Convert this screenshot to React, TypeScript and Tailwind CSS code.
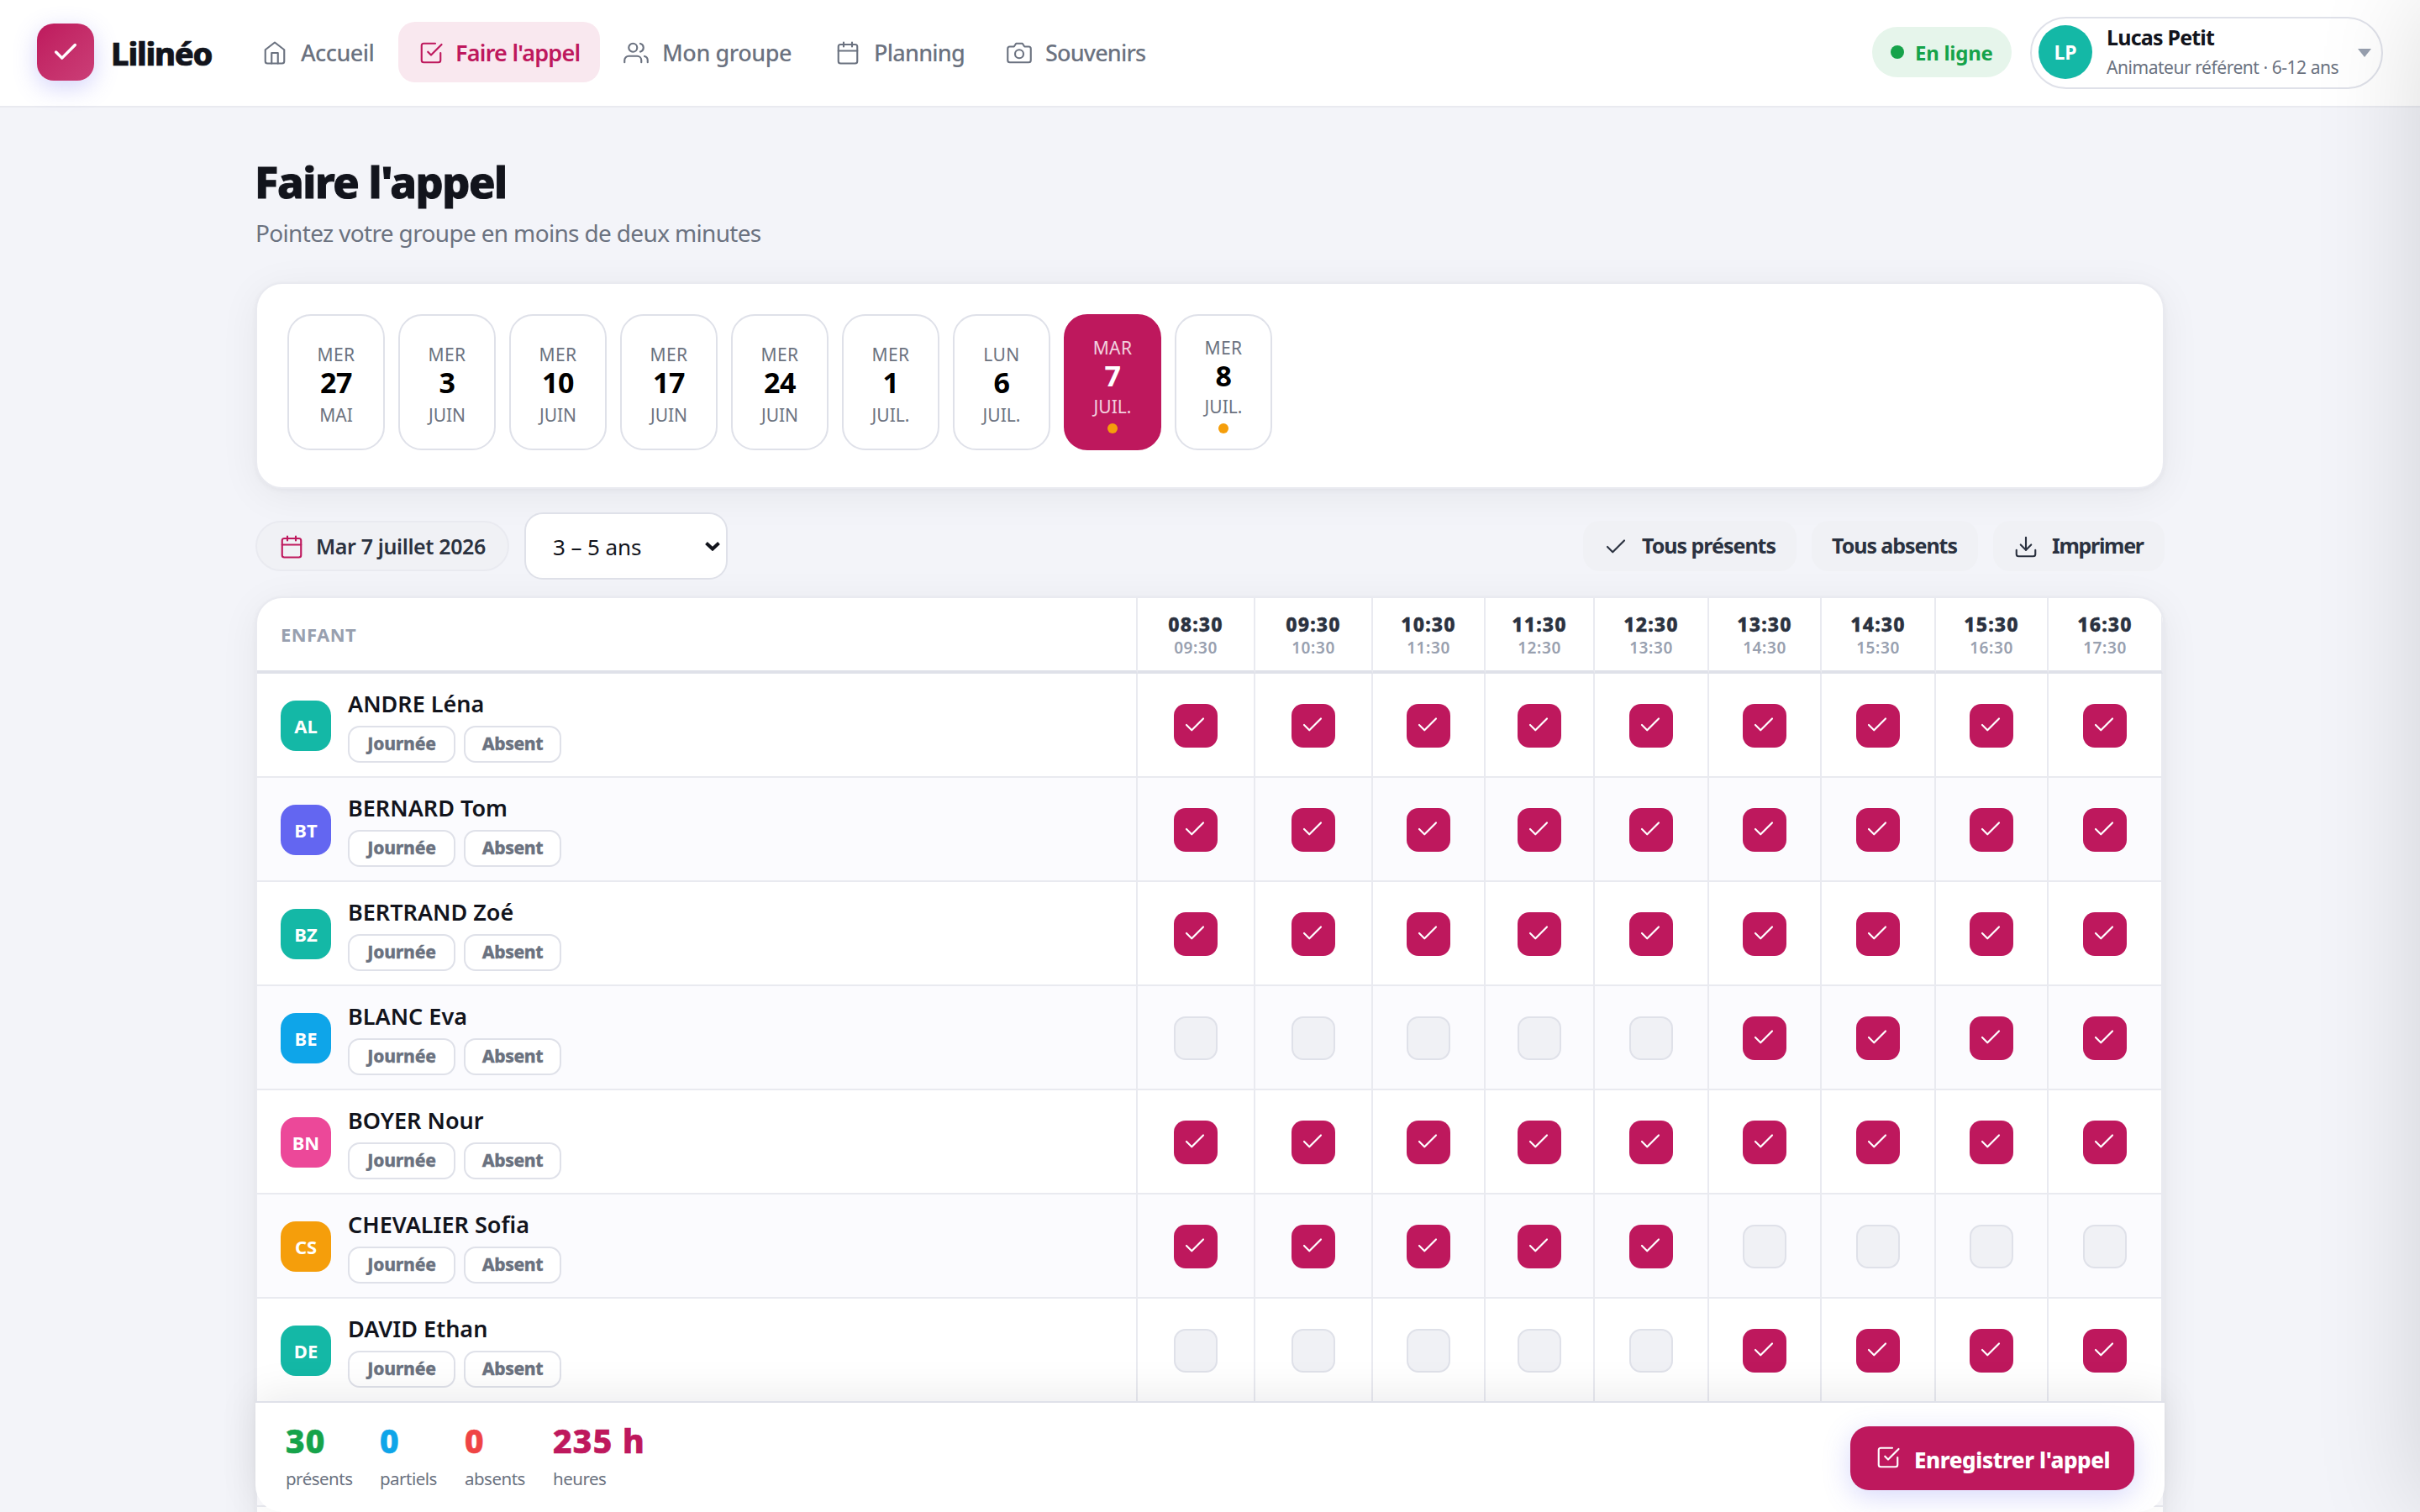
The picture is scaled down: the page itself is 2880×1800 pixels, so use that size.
import React from "react";

type IconName = "home" | "checkSquare" | "users" | "calendar" | "camera" | "check" | "download";

const shapes: Record<IconName, React.ReactNode> = {
  home: (
    <>
      <path d="M3 9l9-7 9 7v11a2 2 0 0 1-2 2H5a2 2 0 0 1-2-2z" />
      <polyline points="9 22 9 12 15 12 15 22" />
    </>
  ),
  checkSquare: (
    <>
      <polyline points="9 11 12 14 22 4" />
      <path d="M21 12v7a2 2 0 0 1-2 2H5a2 2 0 0 1-2-2V5a2 2 0 0 1 2-2h11" />
    </>
  ),
  users: (
    <>
      <path d="M17 21v-2a4 4 0 0 0-4-4H5a4 4 0 0 0-4 4v2" />
      <circle cx="9" cy="7" r="4" />
      <path d="M23 21v-2a4 4 0 0 0-3-3.87" />
      <path d="M16 3.13a4 4 0 0 1 0 7.75" />
    </>
  ),
  calendar: (
    <>
      <rect x="3" y="4" width="18" height="18" rx="2" />
      <path d="M16 2v4M8 2v4M3 10h18" />
    </>
  ),
  camera: (
    <>
      <path d="M23 19a2 2 0 0 1-2 2H3a2 2 0 0 1-2-2V8a2 2 0 0 1 2-2h4l2-3h6l2 3h4a2 2 0 0 1 2 2z" />
      <circle cx="12" cy="13" r="4" />
    </>
  ),
  check: <polyline points="20 6 9 17 4 12" />,
  download: (
    <>
      <path d="M21 15v4a2 2 0 0 1-2 2H5a2 2 0 0 1-2-2v-4" />
      <polyline points="7 10 12 15 17 10" />
      <path d="M12 15V3" />
    </>
  ),
};

function Icon({ name, className = "", stroke = 1.7 }: { name: IconName; className?: string; stroke?: number }) {
  return (
    <svg
      viewBox="0 0 24 24"
      fill="none"
      stroke="currentColor"
      strokeWidth={stroke}
      strokeLinecap="round"
      strokeLinejoin="round"
      className={`shrink-0 ${className || "size-[30px]"}`}
    >
      {shapes[name]}
    </svg>
  );
}

const nav: { label: string; icon: IconName; width: string; text: string; active?: boolean }[] = [
  { label: "Accueil", icon: "home", width: "w-[182px]", text: "tracking-[-0.57px]" },
  { label: "Faire l'appel", icon: "checkSquare", width: "w-[240px]", text: "tracking-[-0.76px]", active: true },
  { label: "Mon groupe", icon: "users", width: "w-[248px]", text: "tracking-[-0.45px]" },
  { label: "Planning", icon: "calendar", width: "w-[200px]", text: "tracking-[-0.75px]" },
  { label: "Souvenirs", icon: "camera", width: "w-[214px]", text: "tracking-[-0.83px]" },
];

const days: { dow: string; num: string; month: string; dot?: boolean; selected?: boolean }[] = [
  { dow: "MER", num: "27", month: "MAI" },
  { dow: "MER", num: "3", month: "JUIN" },
  { dow: "MER", num: "10", month: "JUIN" },
  { dow: "MER", num: "17", month: "JUIN" },
  { dow: "MER", num: "24", month: "JUIN" },
  { dow: "MER", num: "1", month: "JUIL." },
  { dow: "LUN", num: "6", month: "JUIL." },
  { dow: "MAR", num: "7", month: "JUIL.", dot: true, selected: true },
  { dow: "MER", num: "8", month: "JUIL.", dot: true },
];

const slots = [
  ["08:30", "09:30"],
  ["09:30", "10:30"],
  ["10:30", "11:30"],
  ["11:30", "12:30"],
  ["12:30", "13:30"],
  ["13:30", "14:30"],
  ["14:30", "15:30"],
  ["15:30", "16:30"],
  ["16:30", "17:30"],
];

const children = [
  { initials: "AL", name: "ANDRE Léna", color: "bg-[#14b8a6]", marks: "111111111" },
  { initials: "BT", name: "BERNARD Tom", color: "bg-[#6366f1]", marks: "111111111" },
  { initials: "BZ", name: "BERTRAND Zoé", color: "bg-[#14b8a6]", marks: "111111111" },
  { initials: "BE", name: "BLANC Eva", color: "bg-[#0ea5e9]", marks: "000001111" },
  { initials: "BN", name: "BOYER Nour", color: "bg-[#ec4899]", marks: "111111111" },
  { initials: "CS", name: "CHEVALIER Sofia", color: "bg-[#f59e0b]", marks: "111110000" },
  { initials: "DE", name: "DAVID Ethan", color: "bg-[#14b8a6]", marks: "000001111" },
];

const stats = [
  { value: "30", label: "présents", color: "text-[#16a34a]", width: "w-[112px]" },
  { value: "0", label: "partiels", color: "text-[#0ea5e9]", width: "w-[101px]" },
  { value: "0", label: "absents", color: "text-[#ef4444]", width: "w-[105px]" },
  { value: "235 h", label: "heures", color: "text-[#be185d]", width: "w-[140px]" },
];

const rowGrid = "grid grid-cols-[1048px_140px_140px_134px_130px_136px_134px_136px_134px_136px]";
const cardShadow = "shadow-[0_2px_6px_rgba(15,18,28,0.04),0_8px_48px_rgba(15,18,28,0.06)]";

function Header() {
  return (
    <header className="flex h-32 shrink-0 items-start border-b-2 border-[#e9eaf0] bg-white px-11">
      <div className="flex h-[124px] w-[244px] items-center">
        <div className="flex size-[68px] items-center justify-center rounded-[20px] bg-linear-135 from-[#be185d] to-[#cb3e77] text-white shadow-[0_8px_28px_rgba(99,102,241,0.28)]">
          <Icon name="check" stroke={2.4} className="size-[34px]" />
        </div>
        <span className="ml-5 pt-[3px] text-[38px] font-extrabold tracking-[-1.27px] text-[#12141c] [-webkit-text-stroke:0.7px]">
          Lilinéo
        </span>
      </div>
      <nav className="flex gap-1 pt-[26px]">
        {nav.map((item) => (
          <a
            key={item.label}
            className={`flex h-[72px] items-center rounded-[20px] pl-6 ${item.width} ${
              item.active ? "gap-[14px] bg-[#f9e8ef] text-[#be185d]" : "gap-4 text-[#6b7280]"
            }`}
          >
            <Icon name={item.icon} className="mt-[2px] size-[30px]" />
            <span
              className={`pt-[3px] text-[27px] whitespace-nowrap ${item.text} ${item.active ? "font-semibold" : "font-medium"}`}
            >
              {item.label}
            </span>
          </a>
        ))}
      </nav>
      <div className="ml-auto flex items-start">
        <div className="mt-8 flex h-[60px] w-[166px] items-center rounded-full bg-[#e6f5eb] pl-[22px] text-[#16a34a]">
          <span className="size-4 rounded-full bg-[#16a34a]" />
          <span className="ml-[13px] pt-px text-[24px] font-bold tracking-[-0.27px] whitespace-nowrap">En ligne</span>
        </div>
        <div className="mt-5 ml-[22px] flex h-[86px] w-[420px] rounded-full border-2 border-[#dfe1e9] pt-2 pl-2">
          <div className="flex size-16 items-center justify-center rounded-full bg-[#14b8a6] pt-px text-[23px] font-bold text-white">
            LP
          </div>
          <div className="-mt-px ml-[17px] whitespace-nowrap">
            <div className="text-[25px] leading-[30px] font-bold tracking-[-0.79px] text-[#12141c]">Lucas Petit</div>
            <div className="mt-2 text-[21px] leading-[26px] tracking-[-0.45px] text-[#6b7280]">
              Animateur référent · 6-12 ans
            </div>
          </div>
          <svg viewBox="0 0 16 10" className="mt-7 mr-3 ml-auto h-[10px] w-4 fill-[#98a0af]">
            <path d="M0 0h16l-8 10z" />
          </svg>
        </div>
      </div>
    </header>
  );
}

function DayPicker() {
  return (
    <section className={`mt-[39px] flex gap-4 rounded-[32px] border-2 border-[#e9eaf0] bg-white px-9 pt-9 pb-11 ${cardShadow}`}>
      {days.map((d) => (
        <button
          key={d.num}
          className={`flex h-[162px] w-[116px] flex-col items-center rounded-[28px] border-2 ${d.dot ? "pt-6" : "pt-8"} ${
            d.selected ? "border-[#be185d] bg-[#be185d] text-white" : "border-[#dfe1e9] bg-white text-black"
          }`}
        >
          <span className={`text-[21px] leading-7 tracking-[0.39px] ${d.selected ? "text-white/80" : "text-[#6b7280]"}`}>
            {d.dow}
          </span>
          <span className="-mt-px text-[34px] leading-10 font-bold tracking-[-0.45px]">{d.num}</span>
          <span
            className={`text-[21px] leading-7 ${d.dot ? "mt-[3px]" : "mt-[5px]"} ${d.selected ? "text-white/80" : "text-[#6b7280]"}`}
          >
            {d.month}
          </span>
          {d.dot && <span className="mt-[6px] size-3 rounded-full bg-[#f59e0b]" />}
        </button>
      ))}
    </section>
  );
}

function Toolbar() {
  const button =
    "flex h-[60px] items-center gap-4 rounded-[20px] bg-[#f0f1f5] pl-6 text-[25px] font-bold whitespace-nowrap text-[#2b3240]";
  return (
    <div className="mt-7 flex h-20 items-center">
      <div className="flex h-[60px] w-[302px] items-center rounded-full border-2 border-[#e9eaf0] bg-[#f0f1f5] pl-[26px]">
        <Icon name="calendar" className="mt-[2px] size-[30px] text-[#be185d]" />
        <span className="ml-[14px] pt-px text-[25px] font-semibold tracking-[-0.38px] whitespace-nowrap text-[#2b3240]">
          Mar 7 juillet 2026
        </span>
      </div>
      <div className="ml-[18px] flex h-20 w-[242px] items-center rounded-[22px] border-2 border-[#dfe1e9] bg-white pl-8">
        <span className="pt-[3px] text-[26px] tracking-[-0.08px] text-[#12141c]">3 – 5 ans</span>
        <svg viewBox="0 0 18 11" className="mr-[7px] ml-auto h-[11px] w-[18px] fill-none stroke-[#12141c] stroke-[4]">
          <path d="M1.5 1.5L9 8.5l7.5-7" />
        </svg>
      </div>
      <div className="ml-auto flex gap-[18px]">
        <button className={`${button} w-[254px] tracking-[-1.01px]`}>
          <Icon name="check" className="mt-[2px] size-[30px]" />
          Tous présents
        </button>
        <button className={`${button} w-[198px] tracking-[-1.05px]`}>Tous absents</button>
        <button className={`${button} w-[204px] tracking-[-1.3px]`}>
          <Icon name="download" className="mt-[2px] size-[30px]" />
          Imprimer
        </button>
      </div>
    </div>
  );
}

function Mark({ on }: { on: boolean }) {
  return on ? (
    <span className="flex size-[52px] justify-center rounded-[14px] bg-[#be185d] pt-[10px] text-white">
      <Icon name="check" stroke={1.7} className="-ml-[2px] size-[30px]" />
    </span>
  ) : (
    <span className="size-[52px] rounded-[14px] border-2 border-[#dfe1e9] bg-[#f0f1f5]" />
  );
}

function Table() {
  const chip =
    "flex h-11 items-center justify-center rounded-[14px] border-2 border-[#dfe1e9] bg-white text-[21px] font-extrabold text-[#6b7280] [-webkit-text-stroke:0.3px]";
  return (
    <section
      className={`mt-5 h-[1200px] shrink-0 overflow-hidden rounded-[32px] border-2 border-[#e9eaf0] bg-white ${cardShadow}`}
    >
      <div className={`${rowGrid} h-[90px]`}>
        <div className="flex items-center border-r-2 border-b-4 border-r-[#e9eaf0] border-b-[#dfe1e9] pl-7 text-[22px] font-bold tracking-[0.41px] text-[#98a0af]">
          ENFANT
        </div>
        {slots.map(([from, to]) => (
          <div key={from} className="border-r-2 border-b-4 border-r-[#e9eaf0] border-b-[#dfe1e9] pt-[17px] text-center">
            <div className="text-[23px] leading-7 font-extrabold tracking-[1.15px] text-[#2b3240] [-webkit-text-stroke:0.4px]">
              {from}
            </div>
            <div className="mt-[2px] text-[19px] leading-6 font-semibold tracking-[0.6px] text-[#98a0af]">{to}</div>
          </div>
        ))}
      </div>
      {children.map((c) => (
        <div key={c.name} className={`${rowGrid} h-[124px] even:bg-white odd:bg-[#fbfbfe]`}>
          <div className="flex items-center border-r-2 border-b-2 border-[#e9eaf0] pt-[2px] pl-7">
            <div
              className={`flex size-[60px] items-center justify-center rounded-[18px] text-[22px] font-bold text-white ${c.color}`}
            >
              {c.initials}
            </div>
            <div className="ml-5">
              <div className="text-[27px] leading-9 font-semibold text-[#12141c]">{c.name}</div>
              <div className="mt-2 flex gap-[10px]">
                <span className={`${chip} w-32 tracking-[-0.24px]`}>Journée</span>
                <span className={`${chip} w-[116px] tracking-[-0.4px]`}>Absent</span>
              </div>
            </div>
          </div>
          {c.marks.split("").map((m, i) => (
            <div key={i} className="flex items-center justify-center border-r-2 border-b-2 border-[#e9eaf0] pt-[2px]">
              <Mark on={m === "1"} />
            </div>
          ))}
        </div>
      ))}
      <div className="h-[124px] border-b-2 border-[#e9eaf0] bg-[#fbfbfe]" />
    </section>
  );
}

function Footer() {
  return (
    <footer className="absolute inset-x-[304px] bottom-0 flex h-[132px] rounded-b-[32px] border-t-2 border-[#dfe1e9] bg-white pl-9 shadow-[0_-8px_48px_rgba(15,18,28,0.08)]">
      {stats.map((s) => (
        <div key={s.label} className={`pt-[23px] whitespace-nowrap ${s.width}`}>
          <div
            className={`text-[39px] leading-[44px] font-extrabold tracking-[1.3px] [-webkit-text-stroke:0.7px] ${s.color}`}
          >
            {s.value}
          </div>
          <div className="mt-[9px] text-[20.5px] leading-7 tracking-[-0.5px] text-[#6b7280]">{s.label}</div>
        </div>
      ))}
      <button className="mt-7 mr-9 ml-auto flex h-[76px] w-[338px] items-center rounded-[22px] bg-[#be185d] pl-[30px] text-white shadow-[0_8px_32px_rgba(99,102,241,0.25)]">
        <Icon name="checkSquare" className="-mt-[2px] size-[30px]" />
        <span className="ml-4 pt-[4px] text-[26px] font-extrabold tracking-[-0.41px] whitespace-nowrap">
          Enregistrer l'appel
        </span>
      </button>
    </footer>
  );
}

export default function App() {
  return (
    <div className="relative flex h-[1800px] w-[2880px] flex-col overflow-hidden bg-[#f3f4f9] font-['Noto_Sans',sans-serif]">
      <Header />
      <main className="flex flex-col px-[304px] pt-[58px]">
        <h1 className="-ml-px text-[52px] leading-[60px] font-extrabold tracking-[-1.41px] text-[#12141c] [-webkit-text-stroke:1px]">
          Faire l'appel
        </h1>
        <p className="mt-[11px] text-[28px] leading-10 tracking-[-0.66px] text-[#6b7280]">
          Pointez votre groupe en moins de deux minutes
        </p>
        <DayPicker />
        <Toolbar />
        <Table />
      </main>
      <Footer />
      <div className="absolute inset-y-0 left-full w-[400px] shadow-[0_0_120px_rgba(0,0,0,0.14)]" />
    </div>
  );
}
